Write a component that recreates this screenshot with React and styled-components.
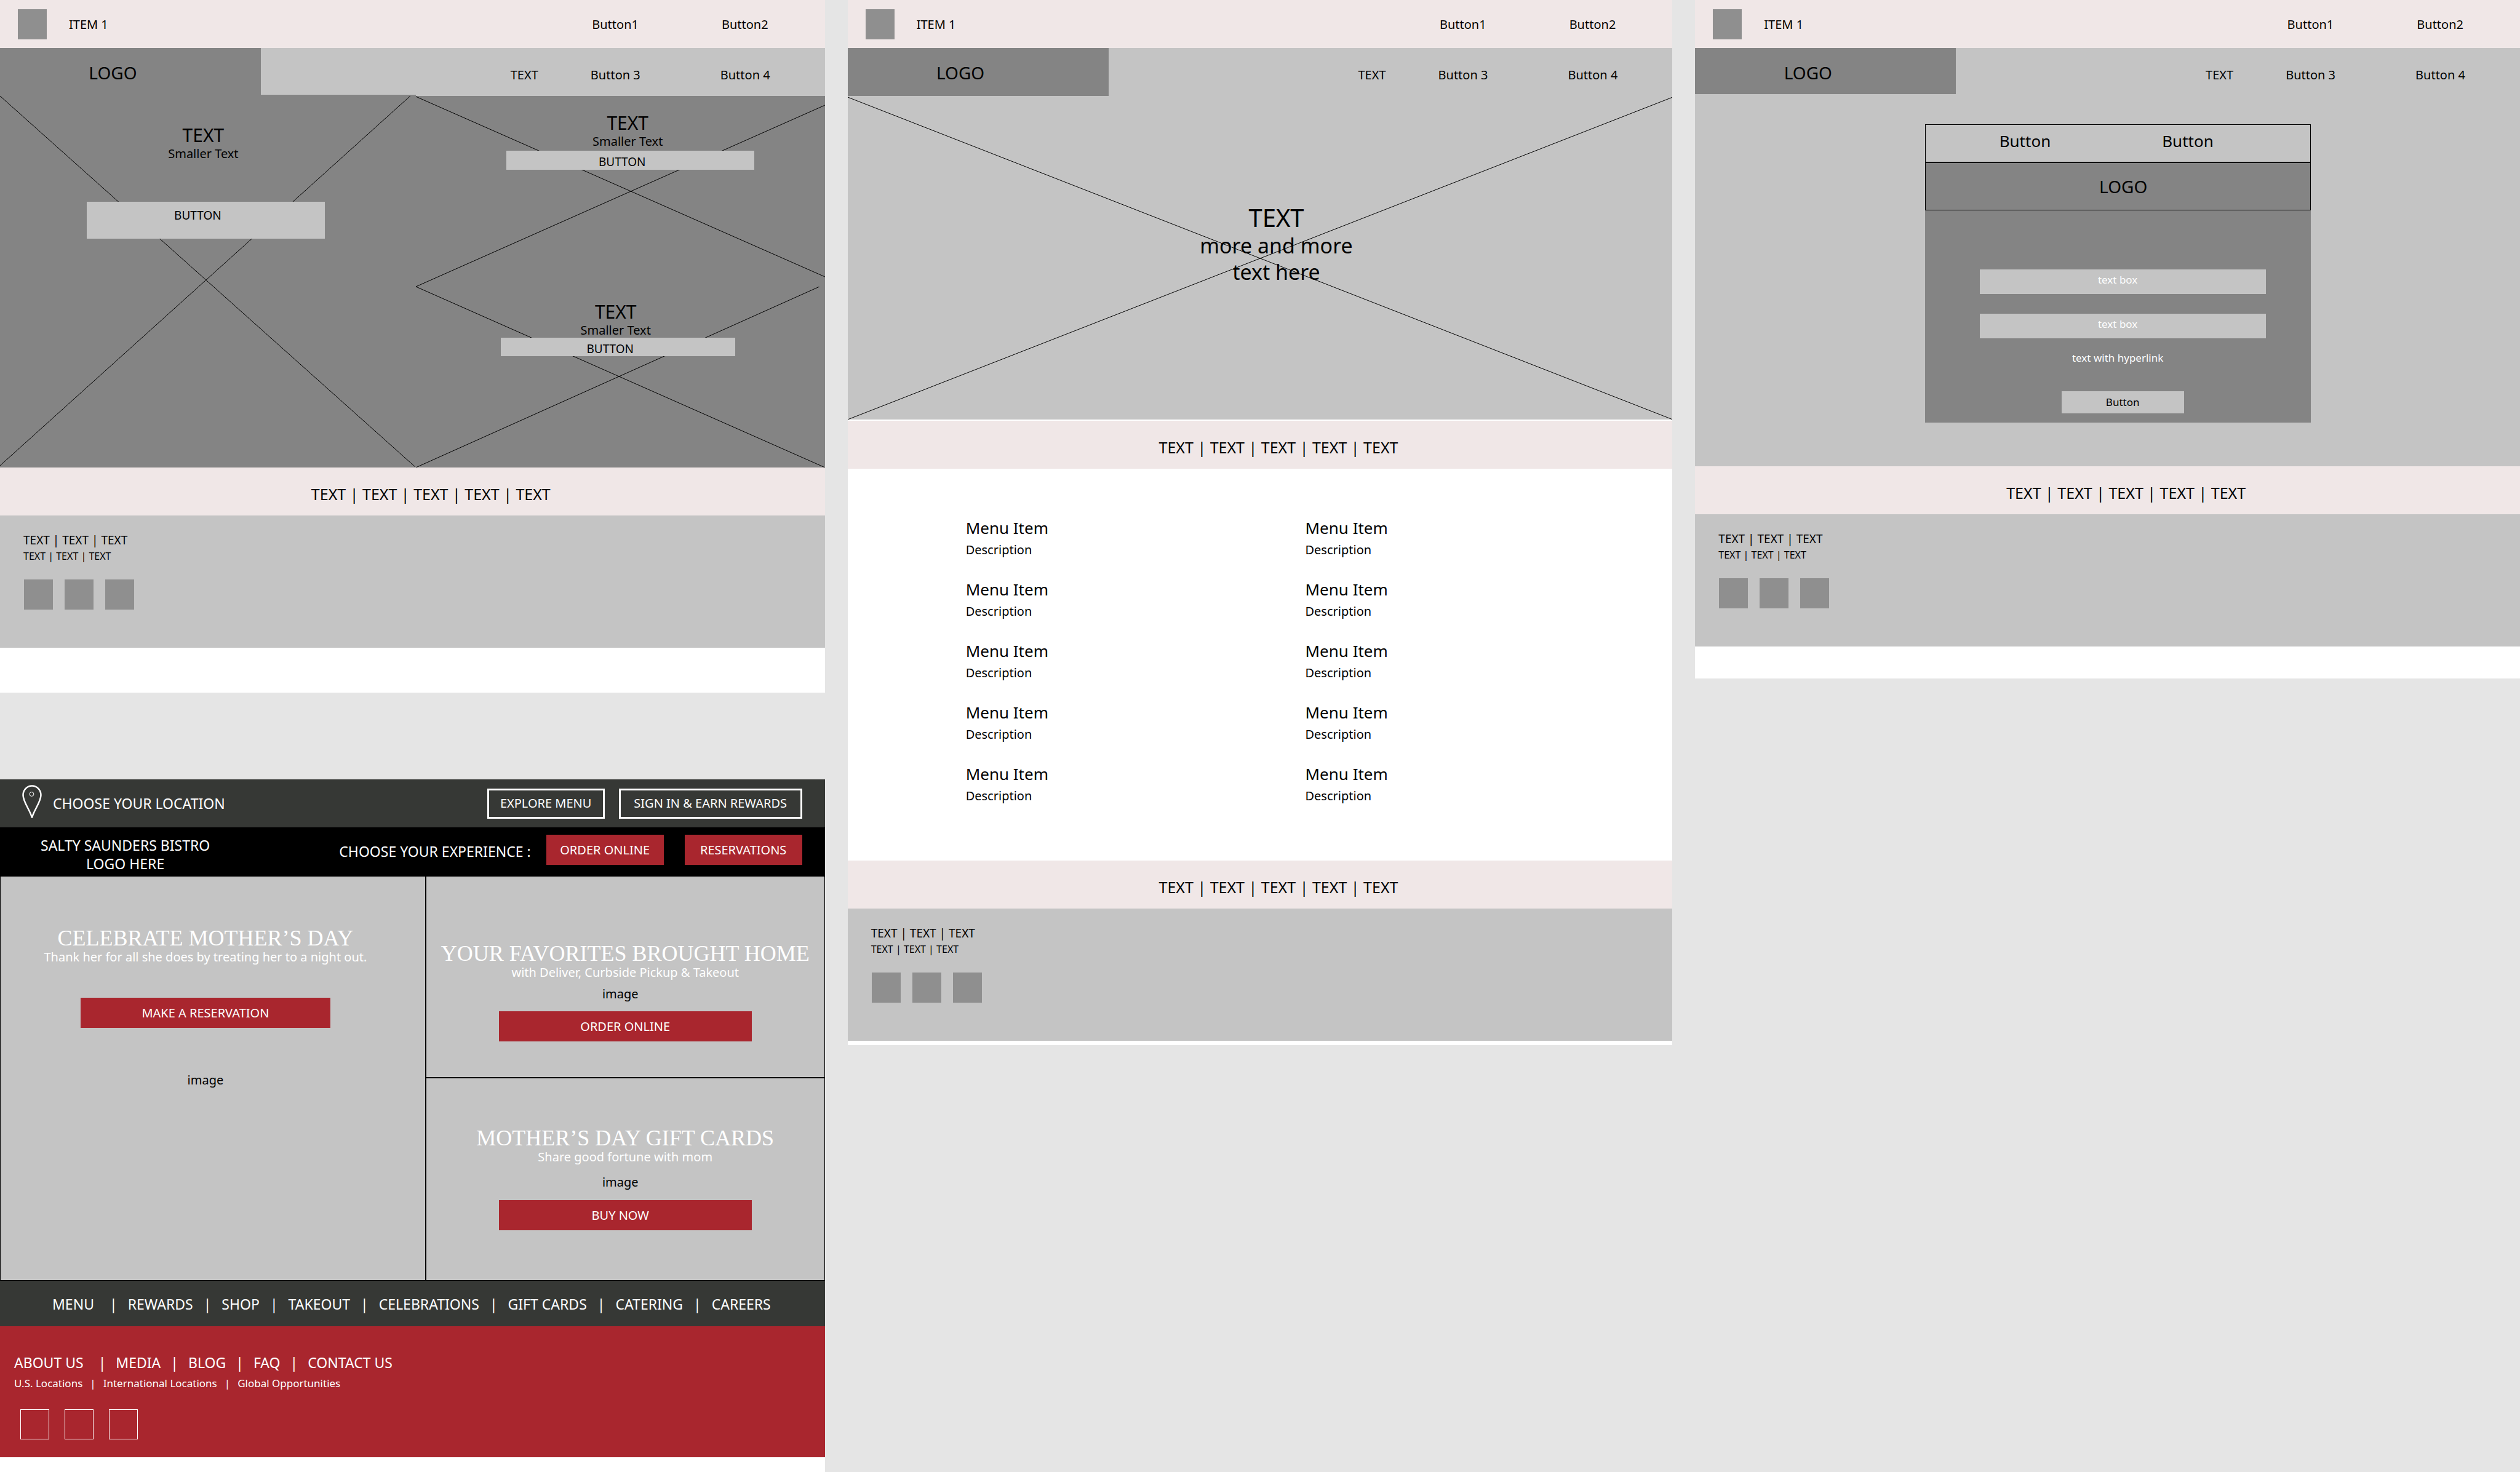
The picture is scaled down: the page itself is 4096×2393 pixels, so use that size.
import React from "react";
import styled, { createGlobalStyle, css } from "styled-components";

const c = {
  canvas: "#e5e5e5",
  blush: "#f0e7e7",
  light: "#c4c4c4",
  mid: "#848484",
  square: "#8f8f8f",
  charcoal: "#363835",
  red: "#a9262e",
};

const GlobalStyle = createGlobalStyle`
  *, *::before, *::after { box-sizing: border-box; }
  body {
    margin: 0;
    background: ${c.canvas};
    color: #000;
    font-family: "Noto Sans", "Open Sans", sans-serif;
    font-size: 20px;
    line-height: 24px;
  }
  h1, h2, h3, p, ul { margin: 0; padding: 0; font-weight: 400; }
  ul { list-style: none; }
  a { color: inherit; text-decoration: none; }
  button, input { font: inherit; color: inherit; border: 0; border-radius: 0; padding: 0; margin: 0; background: none; }
  button { cursor: pointer; }
`;

/* ---------- page ---------- */

const Board = styled.div`
  display: grid;
  grid-template-columns: repeat(3, minmax(0, 1fr));
  column-gap: 37px;
  align-items: start;
`;

const Column = styled.div`
  display: flex;
  flex-direction: column;
  gap: 141px;
`;

const Screen = styled.section`
  background: #fff;
  padding-bottom: ${(p) => p.$tail}px;
`;

/* ---------- wireframe header ---------- */

const TopBar = styled.header`
  display: flex;
  align-items: center;
  justify-content: space-between;
  padding: 15px 92px 14px 29px;
  background: ${c.blush};
`;

const Brand = styled.div`
  display: flex;
  align-items: center;
  gap: 36px;
`;

const Square = styled.span`
  display: block;
  width: 47px;
  height: 49px;
  background: ${(p) => (p.$outline ? "transparent" : c.square)};
  border: ${(p) => (p.$outline ? "1px solid #fff" : "0")};
`;

const Actions = styled.div`
  display: flex;
  align-items: center;
  gap: ${(p) => p.$gap}px;
`;

const PlainButton = styled.button`
  font-size: ${(p) => p.$size || 20}px;
  line-height: ${(p) => (p.$size ? 36 : 24)}px;
`;

const SubBar = styled.div`
  display: grid;
  grid-template-columns: 424fr 917fr;
  align-items: start;
  height: 78px;
  background: ${c.light};
`;

const LogoBox = styled.div`
  height: ${(p) => p.$height}px;
  padding: 22px 57px 0 0;
  background: ${c.mid};
  font-size: 28px;
  line-height: 36px;
  text-align: center;
`;

const SubNav = styled.nav`
  display: flex;
  justify-content: flex-end;
  gap: 85px;
  padding: 32px 89px 0 0;
`;

function WireHeader({ logoHeight = 78 }) {
  return (
    <>
      <TopBar>
        <Brand>
          <Square />
          <span>ITEM 1</span>
        </Brand>
        <Actions $gap={135}>
          <PlainButton type="button">Button1</PlainButton>
          <PlainButton type="button">Button2</PlainButton>
        </Actions>
      </TopBar>
      <SubBar>
        <LogoBox $height={logoHeight}>LOGO</LogoBox>
        <SubNav>
          <span>TEXT</span>
          <Actions $gap={130}>
            <PlainButton type="button">Button 3</PlainButton>
            <PlainButton type="button">Button 4</PlainButton>
          </Actions>
        </SubNav>
      </SubBar>
    </>
  );
}

/* ---------- wireframe footer ---------- */

const Strip = styled.nav`
  padding: 26px 0 18px 60px;
  background: ${c.blush};
  font-size: 25px;
  line-height: 34px;
  text-align: center;
`;

const GreyFooter = styled.footer`
  padding: 27px 38px 62px;
  background: ${c.light};
`;

const FooterLine = styled.p`
  font-size: ${(p) => p.$size}px;
  line-height: 26px;
`;

const Squares = styled.div`
  display: flex;
  gap: ${(p) => p.$gap}px;
  margin: ${(p) => p.$margin};
`;

function PipeLinks({ count }) {
  return Array.from({ length: count }, (_, i) => (
    <React.Fragment key={i}>
      {i > 0 && " | "}
      <a href="#">TEXT</a>
    </React.Fragment>
  ));
}

function LinkStrip() {
  return (
    <Strip>
      <PipeLinks count={5} />
    </Strip>
  );
}

function WireFooter() {
  return (
    <>
      <LinkStrip />
      <GreyFooter>
        <FooterLine $size={19}>
          <PipeLinks count={3} />
        </FooterLine>
        <FooterLine $size={16}>
          <PipeLinks count={3} />
        </FooterLine>
        <Squares $gap={19} $margin="25px 0 0 1px">
          <Square />
          <Square />
          <Square />
        </Squares>
      </GreyFooter>
    </>
  );
}

/* ---------- image placeholders ---------- */

const CrossSvg = styled.svg`
  position: absolute;
  inset: 0;
  width: 100%;
  height: 100%;
`;

function Cross({ w, h, lines }) {
  return (
    <CrossSvg viewBox={`0 0 ${w} ${h}`} preserveAspectRatio="none" aria-hidden="true">
      {lines.map(([x1, y1, x2, y2], i) => (
        <line key={i} x1={x1} y1={y1} x2={x2} y2={y2} stroke="#000" strokeWidth="1" vectorEffect="non-scaling-stroke" />
      ))}
    </CrossSvg>
  );
}

const HomeHero = styled.main`
  display: grid;
  grid-template-columns: 676fr 665fr;
  grid-template-rows: 310px 294px;
`;

const Tile = styled.article`
  position: relative;
  display: flex;
  flex-direction: column;
  align-items: center;
  padding: ${(p) => p.$pad};
  background: ${c.mid};
  ${(p) => p.$tall && css`
    grid-row: span 2;
    margin-top: -2px;
  `}
`;

const Caption = styled.div`
  position: relative;
  padding-right: 8px;
  text-align: center;
`;

const TileTitle = styled.h2`
  font-size: 30px;
  line-height: 36px;
`;

const TileButton = styled.button`
  position: relative;
  width: ${(p) => p.$width}px;
  height: ${(p) => p.$height}px;
  margin-top: ${(p) => p.$top}px;
  padding: ${(p) => p.$inset}px 26px 0 0;
  background: ${c.light};
  font-size: 19px;
  line-height: 28px;
  display: flex;
  justify-content: center;
  align-items: flex-start;
`;

function PromoTile({ tall, pad, cross, button }) {
  return (
    <Tile $tall={tall} $pad={pad}>
      <Cross {...cross} />
      <Caption>
        <TileTitle>TEXT</TileTitle>
        <p>Smaller Text</p>
      </Caption>
      <TileButton type="button" $width={button.width} $height={button.height} $top={button.top} $inset={button.inset}>
        BUTTON
      </TileButton>
    </Tile>
  );
}

function HomeWireframe() {
  return (
    <Screen $tail={73}>
      <WireHeader />
      <HomeHero>
        <PromoTile
          tall
          pad="48px 7px 0 0"
          cross={{ w: 676, h: 606, lines: [[0, 2, 675, 605], [667, 2, 0, 603]] }}
          button={{ width: 387, height: 60, top: 66, inset: 8 }}
        />
        <PromoTile
          pad="26px 0 0 32px"
          cross={{ w: 665, h: 310, lines: [[0, 1, 665, 294], [665, 15, 0, 310]] }}
          button={{ width: 403, height: 31, top: 3, inset: 4 }}
        />
        <PromoTile
          pad="23px 7px 0 0"
          cross={{ w: 665, h: 294, lines: [[0, 0, 665, 294], [656, 0, 0, 294]] }}
          button={{ width: 381, height: 30, top: 0, inset: 4 }}
        />
      </HomeHero>
      <WireFooter />
    </Screen>
  );
}

/* ---------- menu wireframe ---------- */

const MenuHero = styled.div`
  position: relative;
  min-height: 526px;
  padding: 174px 0 0 53px;
  margin-bottom: 2px;
  background: ${c.light};
  text-align: center;
`;

const HeroText = styled.div`
  position: relative;
`;

const HeroTitle = styled.h1`
  font-size: 40px;
  line-height: 48px;
`;

const HeroCopy = styled.p`
  font-size: 34px;
  line-height: 43px;
`;

const MenuGrid = styled.main`
  display: grid;
  grid-template-columns: 552fr 597fr;
  padding: 78px 0 91px 192px;
`;

const MenuList = styled.ul`
  display: flex;
  flex-direction: column;
  gap: 32px;
`;

const MenuItem = styled.li`
  display: flex;
  flex-direction: column;
  gap: 4px;
`;

const ItemName = styled.h3`
  font-size: 26px;
  line-height: 36px;
`;

const ItemText = styled.p`
  line-height: 28px;
`;

function MenuColumn() {
  return (
    <MenuList>
      {Array.from({ length: 5 }, (_, i) => (
        <MenuItem key={i}>
          <ItemName>Menu Item</ItemName>
          <ItemText>Description</ItemText>
        </MenuItem>
      ))}
    </MenuList>
  );
}

function MenuWireframe() {
  return (
    <Screen $tail={7}>
      <WireHeader />
      <MenuHero>
        <Cross w={1341} h={526} lines={[[0, 2, 1341, 526], [1341, 2, 0, 526]]} />
        <HeroText>
          <HeroTitle>TEXT</HeroTitle>
          <HeroCopy>
            more and more
            <br />
            text here
          </HeroCopy>
        </HeroText>
      </MenuHero>
      <LinkStrip />
      <MenuGrid>
        <MenuColumn />
        <MenuColumn />
      </MenuGrid>
      <WireFooter />
    </Screen>
  );
}

/* ---------- sign-in wireframe ---------- */

const SignInArea = styled.main`
  display: flex;
  justify-content: center;
  padding: 46px 0 71px 33px;
  background: ${c.light};
`;

const Card = styled.form`
  width: 627px;
  background: ${c.mid};
`;

const CardTabs = styled.div`
  display: flex;
  gap: 181px;
  height: 62px;
  padding: 8px 0 0 120px;
  align-items: flex-start;
  border: 1px solid #000;
  background: ${c.light};
`;

const CardLogo = styled.div`
  height: 78px;
  padding: 20px 0 0 18px;
  border: 1px solid #000;
  font-size: 28px;
  line-height: 36px;
  text-align: center;
`;

const CardBody = styled.div`
  display: flex;
  flex-direction: column;
  align-items: center;
  padding: 96px 0 15px 16px;
  font-size: 17px;
`;

const Field = styled.input`
  width: 465px;
  height: 40px;
  margin-bottom: 32px;
  padding: 0 16px 8px 0;
  background: ${c.light};
  text-align: center;
  &::placeholder {
    color: #fff;
    opacity: 1;
  }
`;

const HyperLink = styled.a`
  margin: -12px 0 42px;
  padding-right: 16px;
  color: #fff;
`;

const SubmitButton = styled.button`
  width: 199px;
  height: 36px;
  background: ${c.light};
`;

function SignInWireframe() {
  return (
    <Screen $tail={52}>
      <WireHeader logoHeight={75} />
      <SignInArea>
        <Card>
          <CardTabs>
            <PlainButton type="button" $size={26}>Button</PlainButton>
            <PlainButton type="button" $size={26}>Button</PlainButton>
          </CardTabs>
          <CardLogo>LOGO</CardLogo>
          <CardBody>
            <Field type="text" aria-label="text box" placeholder="text box" />
            <Field type="text" aria-label="text box" placeholder="text box" />
            <HyperLink href="#">text with hyperlink</HyperLink>
            <SubmitButton type="button">Button</SubmitButton>
          </CardBody>
        </Card>
      </SignInArea>
      <WireFooter />
    </Screen>
  );
}

/* ---------- Salty Saunders Bistro ---------- */

const BistroTop = styled.header`
  display: flex;
  align-items: center;
  justify-content: space-between;
  height: 78px;
  padding: 0 37px 0 36px;
  background: ${c.charcoal};
  color: #fff;
`;

const Location = styled.div`
  display: flex;
  align-items: center;
  gap: 18px;
  font-size: 23px;
  line-height: 30px;
`;

const Pin = styled.svg`
  width: 32px;
  height: 56px;
  margin-bottom: 4px;
`;

const OutlineButton = styled.button`
  width: ${(p) => p.$width}px;
  height: 49px;
  border: 3px solid #fff;
`;

const BistroBar = styled.div`
  display: flex;
  justify-content: space-between;
  align-items: flex-start;
  height: 79px;
  padding: 0 37px 0 66px;
  background: #000;
  color: #fff;
`;

const BistroLogo = styled.h1`
  padding-top: 14px;
  font-size: 23px;
  line-height: 30px;
  text-align: center;
`;

const Experience = styled.div`
  display: flex;
  align-items: center;
  gap: 25px;
  padding-top: 12px;
`;

const ExperienceLabel = styled.span`
  padding-top: 4px;
  font-size: 23px;
  line-height: 30px;
`;

const RedButton = styled.button`
  width: ${(p) => p.$width || 191}px;
  height: 49px;
  margin-top: ${(p) => p.$top || 0}px;
  padding-right: ${(p) => p.$shift || 0}px;
  background: ${c.red};
  color: #fff;
`;

const OfferGrid = styled.main`
  display: grid;
  grid-template-columns: 692fr 649fr;
  grid-template-rows: 328px 330px;
`;

const Offer = styled.article`
  display: flex;
  flex-direction: column;
  align-items: center;
  padding: ${(p) => p.$pad};
  border: 1px solid #000;
  background: ${c.light};
  white-space: nowrap;
  ${(p) => p.$tall && css`grid-row: span 2;`}
`;

const OfferTitle = styled.h2`
  color: #fff;
  font-family: "Liberation Serif", "Times New Roman", serif;
  font-size: 36px;
  line-height: 38px;
`;

const OfferCopy = styled.p`
  color: #fff;
`;

const OfferImage = styled.p`
  margin-top: ${(p) => p.$top}px;
  padding-right: ${(p) => p.$shift || 0}px;
`;

const PipeNav = styled.nav`
  display: flex;
  gap: ${(p) => p.$gap}px;
  padding: ${(p) => p.$pad || 0};
  background: ${(p) => p.$bg || "transparent"};
  color: #fff;
  font-size: ${(p) => p.$size}px;
  line-height: ${(p) => p.$line}px;
  white-space: nowrap;
`;

const LeadLink = styled.a`
  margin-right: ${(p) => (p.$lead ? 8 : 0)}px;
`;

function PipeRow({ items, wideFirst, ...rest }) {
  return (
    <PipeNav {...rest}>
      {items.map((label, i) => (
        <React.Fragment key={label}>
          {i > 0 && <span>|</span>}
          <LeadLink href="#" $lead={wideFirst && i === 0}>{label}</LeadLink>
        </React.Fragment>
      ))}
    </PipeNav>
  );
}

const RedFooter = styled.footer`
  display: flex;
  flex-direction: column;
  gap: 6px;
  padding: 43px 23px 29px;
  background: ${c.red};
`;

function BistroScreen() {
  return (
    <Screen $tail={24}>
      <BistroTop>
        <Location>
          <Pin viewBox="0 0 32 56" fill="none" stroke="#fff" aria-hidden="true">
            <path d="M16 53.5 C13.5 42 1.5 28 1.5 16.5 A14.5 15 0 0 1 30.5 16.5 C30.5 28 18.5 42 16 53.5 Z" strokeWidth="2.5" />
            <circle cx="15.5" cy="15" r="3.4" strokeWidth="1" />
          </Pin>
          <span>CHOOSE YOUR LOCATION</span>
        </Location>
        <Actions $gap={23}>
          <OutlineButton type="button" $width={191}>EXPLORE MENU</OutlineButton>
          <OutlineButton type="button" $width={298}>SIGN IN &amp; EARN REWARDS</OutlineButton>
        </Actions>
      </BistroTop>
      <BistroBar>
        <BistroLogo>
          SALTY SAUNDERS BISTRO
          <br />
          LOGO HERE
        </BistroLogo>
        <Experience>
          <ExperienceLabel>CHOOSE YOUR EXPERIENCE :</ExperienceLabel>
          <Actions $gap={34}>
            <RedButton type="button">ORDER ONLINE</RedButton>
            <RedButton type="button">RESERVATIONS</RedButton>
          </Actions>
        </Experience>
      </BistroBar>
      <OfferGrid>
        <Offer $tall $pad="81px 24px 0 0">
          <OfferTitle>CELEBRATE MOTHER’S DAY</OfferTitle>
          <OfferCopy>Thank her for all she does by treating her to a night out.</OfferCopy>
          <RedButton type="button" $width={406} $top={54}>MAKE A RESERVATION</RedButton>
          <OfferImage $top={73}>image</OfferImage>
        </Offer>
        <Offer $pad="106px 0 0">
          <OfferTitle>YOUR FAVORITES BROUGHT HOME</OfferTitle>
          <OfferCopy>with Deliver, Curbside Pickup &amp; Takeout</OfferCopy>
          <OfferImage $top={11} $shift={16}>image</OfferImage>
          <RedButton type="button" $width={411} $top={16}>ORDER ONLINE</RedButton>
        </Offer>
        <Offer $pad="78px 0 0">
          <OfferTitle>MOTHER’S DAY GIFT CARDS</OfferTitle>
          <OfferCopy>Share good fortune with mom</OfferCopy>
          <OfferImage $top={17} $shift={16}>image</OfferImage>
          <RedButton type="button" $width={411} $top={17} $shift={16}>BUY NOW</RedButton>
        </Offer>
      </OfferGrid>
      <PipeRow
        wideFirst
        $gap={17}
        $pad="21px 0 19px 85px"
        $bg={c.charcoal}
        $size={23}
        $line={34}
        items={["MENU", "REWARDS", "SHOP", "TAKEOUT", "CELEBRATIONS", "GIFT CARDS", "CATERING", "CAREERS"]}
      />
      <RedFooter>
        <PipeRow wideFirst $gap={16} $size={23} $line={32} items={["ABOUT US", "MEDIA", "BLOG", "FAQ", "CONTACT US"]} />
        <PipeRow $gap={12} $size={17} $line={24} items={["U.S. Locations", "International Locations", "Global Opportunities"]} />
        <Squares $gap={25} $margin="24px 0 0 10px">
          <Square $outline />
          <Square $outline />
          <Square $outline />
        </Squares>
      </RedFooter>
    </Screen>
  );
}

export default function App() {
  return (
    <>
      <GlobalStyle />
      <Board>
        <Column>
          <HomeWireframe />
          <BistroScreen />
        </Column>
        <Column>
          <MenuWireframe />
        </Column>
        <Column>
          <SignInWireframe />
        </Column>
      </Board>
    </>
  );
}
